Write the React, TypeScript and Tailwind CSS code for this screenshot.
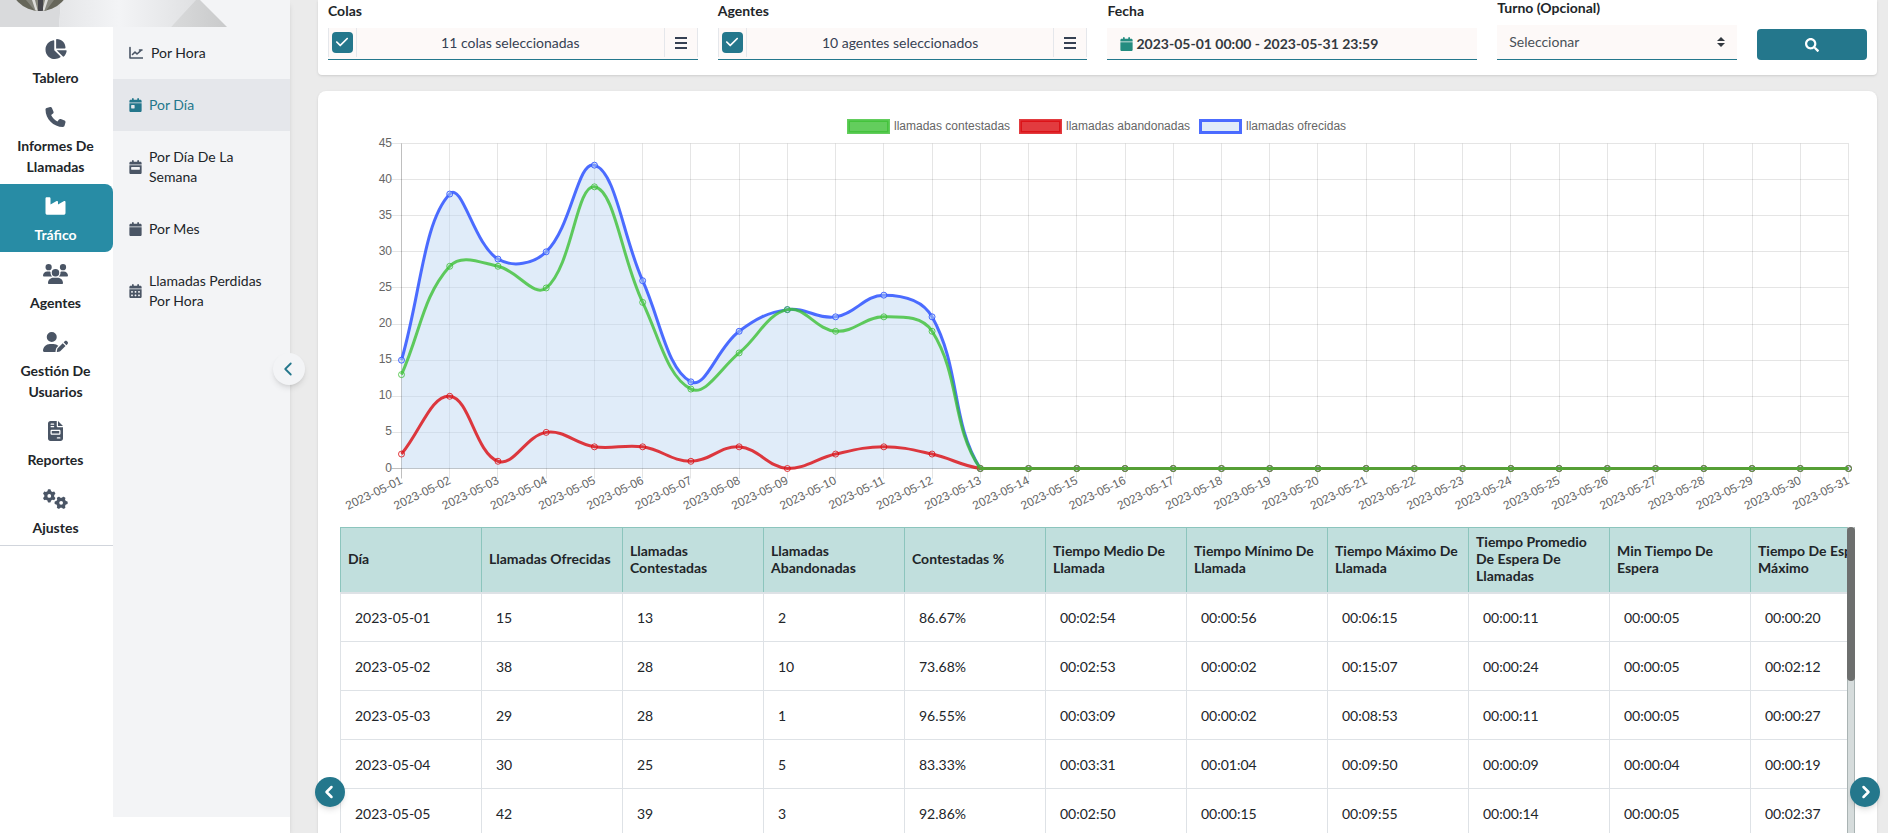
import type { ReactNode } from 'react';
import type { IconType } from 'react-icons';
import {
  FaCalendar, FaCalendarDay, FaCalendarDays, FaCalendarWeek, FaChartPie, FaCheck, FaFileInvoice,
  FaGears, FaIndustry, FaPhone, FaUserPen, FaUsers,
} from 'react-icons/fa6';
import { FaSearch } from 'react-icons/fa';
import { ChevronLeft, ChevronRight } from 'lucide-react';

interface NavItem {
  label:   string;
  icon:    IconType;
  active?: boolean;
}

function ChartLineIcon({ className }: { className?: string }) {
  return (
    <svg viewBox="0 0 14 14" className={className} fill="none" stroke="currentColor" strokeLinecap="round" strokeLinejoin="round">
      <path d="M1 1.5v10.5h12.5" strokeWidth="1.6" />
      <path d="M3.5 8.5l2.5-2.5 2 2 4.5-4M10.5 4h2.5" strokeWidth="1.6" />
    </svg>
  );
}

const NAV: NavItem[] = [
  { label: 'Tablero',              icon: FaChartPie },
  { label: 'Informes De Llamadas', icon: FaPhone },
  { label: 'Tráfico',              icon: FaIndustry, active: true },
  { label: 'Agentes',              icon: FaUsers },
  { label: 'Gestión De Usuarios',  icon: FaUserPen },
  { label: 'Reportes',             icon: FaFileInvoice },
  { label: 'Ajustes',              icon: FaGears },
];

const SUBNAV: { label: string; icon: ReactNode; active?: boolean }[] = [
  { label: 'Por Hora',                   icon: <ChartLineIcon className="mr-px size-[14px]" /> },
  { label: 'Por Día',                    icon: <FaCalendarDay className="h-[14px] w-[13px]" />, active: true },
  { label: 'Por Día De La Semana',       icon: <FaCalendarWeek className="h-[14px] w-[13px]" /> },
  { label: 'Por Mes',                    icon: <FaCalendar className="h-[14px] w-[13px]" /> },
  { label: 'Llamadas Perdidas Por Hora', icon: <FaCalendarDays className="h-[14px] w-[13px]" /> },
];

const OFFERED   = [15, 38, 29, 30, 42, 26, 12, 19, 22, 21, 24, 21];
const ANSWERED  = [13, 28, 28, 25, 39, 23, 11, 16, 22, 19, 21, 19];
const ABANDONED = [2, 10, 1, 5, 3, 3, 1, 3, 0, 2, 3, 2];

const SERIES = [
  { label: 'llamadas ofrecidas',   values: OFFERED,   color: 'rgba(51,88,255,0.88)', fill: 'rgba(186,212,241,0.45)' },
  { label: 'llamadas abandonadas', values: ABANDONED, color: 'rgba(219,10,15,0.8)',  fill: 'none' },
  { label: 'llamadas contestadas', values: ANSWERED,  color: 'rgba(60,193,53,0.8)',  fill: 'none' },
];

const LEGEND = [
  { label: 'llamadas contestadas', x: 508, color: 'rgba(60,193,53,0.8)',  fill: 'rgba(60,193,53,0.8)' },
  { label: 'llamadas abandonadas', x: 680, color: 'rgba(219,10,15,0.8)',  fill: 'rgba(219,10,15,0.8)' },
  { label: 'llamadas ofrecidas',   x: 860, color: 'rgba(51,88,255,0.88)', fill: 'rgba(186,212,241,0.45)' },
];

const DAYS  = 31;
const LEFT  = 61.5;
const RIGHT = 1508.5;
const TOP   = 36.5;
const BASE  = 361.5;
const Y_MAX = 45;

const dayX   = (i: number) => LEFT + (i * (RIGHT - LEFT)) / (DAYS - 1);
const valueY = (v: number) => BASE - (v * (BASE - TOP)) / Y_MAX;
const crisp  = (n: number) => Math.floor(n) + 0.5;

function toPoints(values: number[]) {
  return Array.from({ length: DAYS }, (_, i) => ({ x: dayX(i), y: valueY(values[i] ?? 0) }));
}

// Cubic spline with the handles kept inside the plot area.
function splinePath(values: number[]) {
  const pts = toPoints(values);
  const clamp = (y: number) => Math.min(BASE, Math.max(TOP, y));
  const handles = pts.map((p, i) => {
    const prev = pts[i - 1] ?? p;
    const next = pts[i + 1] ?? p;
    const d0 = Math.hypot(p.x - prev.x, p.y - prev.y);
    const d1 = Math.hypot(next.x - p.x, next.y - p.y);
    const a = (0.4 * d0) / (d0 + d1);
    const b = (0.4 * d1) / (d0 + d1);
    return {
      inX:  p.x - a * (next.x - prev.x),
      inY:  clamp(p.y - a * (next.y - prev.y)),
      outX: p.x + b * (next.x - prev.x),
      outY: clamp(p.y + b * (next.y - prev.y)),
    };
  });
  return pts.reduce((d, p, i) => {
    if (i === 0) return `M${p.x},${p.y}`;
    const h0 = handles[i - 1];
    const h1 = handles[i];
    return `${d}C${h0.outX},${h0.outY} ${h1.inX},${h1.inY} ${p.x},${p.y}`;
  }, '');
}

const HEADERS = [
  'Día', 'Llamadas Ofrecidas', 'Llamadas Contestadas', 'Llamadas Abandonadas', 'Contestadas %',
  'Tiempo Medio De Llamada', 'Tiempo Mínimo De Llamada', 'Tiempo Máximo De Llamada',
  'Tiempo Promedio De Espera De Llamadas', 'Min Tiempo De Espera', 'Tiempo De Espera Máximo',
];

const ROWS = [
  ['2023-05-01', '15', '13', '2',  '86.67%', '00:02:54', '00:00:56', '00:06:15', '00:00:11', '00:00:05', '00:00:20'],
  ['2023-05-02', '38', '28', '10', '73.68%', '00:02:53', '00:00:02', '00:15:07', '00:00:24', '00:00:05', '00:02:12'],
  ['2023-05-03', '29', '28', '1',  '96.55%', '00:03:09', '00:00:02', '00:08:53', '00:00:11', '00:00:05', '00:00:27'],
  ['2023-05-04', '30', '25', '5',  '83.33%', '00:03:31', '00:01:04', '00:09:50', '00:00:09', '00:00:04', '00:00:19'],
  ['2023-05-05', '42', '39', '3',  '92.86%', '00:02:50', '00:00:15', '00:09:55', '00:00:14', '00:00:05', '00:02:37'],
];

function Sidebar() {
  return (
    <aside className="relative z-10 flex h-full w-[290px] shrink-0 flex-col bg-white shadow-md">
      <div className="h-[27px] shrink-0 overflow-hidden bg-gray-100">
        <svg width="290" height="27" viewBox="0 0 290 27" aria-hidden="true">
          <defs>
            <linearGradient id="sheen" x1="0" x2="1" y1="0" y2="0">
              <stop offset="0" stopColor="#e5e6e8" />
              <stop offset="1" stopColor="#f3f4f6" />
            </linearGradient>
            <linearGradient id="peak" x1="0" x2="1" y1="0" y2="0">
              <stop offset="0" stopColor="#d9dadb" />
              <stop offset="1" stopColor="#c9cacb" />
            </linearGradient>
            <linearGradient id="slope" x1="0" x2="1" y1="0" y2="0">
              <stop offset="0" stopColor="#f3f4f6" />
              <stop offset="1" stopColor="#dfe0e2" />
            </linearGradient>
            <clipPath id="avatar"><circle cx="40" cy="-20" r="31" /></clipPath>
          </defs>
          <path d="M0 0h61l-2 27H0z" fill="#d9dadc" />
          <path d="M61 0h58v27H59z" fill="url(#sheen)" />
          <path d="M119 0h79l-27 27h-52z" fill="url(#slope)" />
          <path d="M171 27L196 0h4l27 27z" fill="url(#peak)" />
          <g clipPath="url(#avatar)">
            <rect width="80" height="12" fill="#66665a" />
            <path d="M26 0h28l-9 12h-9z" fill="#85857c" />
            <path d="M32 0h3l3 12h-2zM45 0h3l-4 12h-2z" fill="#ddddda" />
            <path d="M38 0h5v12h-5z" fill="#45454a" />
          </g>
        </svg>
      </div>
      <div className="flex min-h-0 flex-1">
        <nav aria-label="Principal" className="w-[113px] shrink-0 bg-white">
          <ul className="border-b border-gray-300">
            {NAV.map(({ label, icon: Icon, active }) => (
              <li key={label}>
                <a
                  href="#"
                  className={`flex flex-col items-center gap-2 pt-3 pr-[10px] pb-[7px] pl-2 text-center text-sm leading-[21px] font-bold ${active ? 'rounded-r-lg bg-[#288ca5] text-white' : 'text-[#212529]'}`}
                >
                  <Icon className={`h-5 w-[25px] ${active ? 'text-white' : 'text-gray-600'}`} />
                  {label}
                </a>
              </li>
            ))}
          </ul>
        </nav>
        <nav aria-label="Tráfico" className="mb-4 flex-1 bg-gray-100">
          <ul>
            {SUBNAV.map(({ label, icon, active }) => (
              <li key={label}>
                <a
                  href="#"
                  className={`flex items-center gap-[7px] p-4 text-sm leading-5 ${active ? 'bg-gray-200 text-[#24778c]' : 'text-[#212529]'}`}
                >
                  <span className={`shrink-0 ${active ? 'text-[#24778c]' : 'text-gray-600'}`}>{icon}</span>
                  {label}
                </a>
              </li>
            ))}
          </ul>
        </nav>
      </div>
      <button
        type="button"
        aria-label="Contraer menú"
        className="absolute top-[353px] -right-[15px] flex size-8 items-center justify-center rounded-full bg-gray-100 pr-[2px] text-[#24778c] shadow-md"
      >
        <ChevronLeft size={22} />
      </button>
    </aside>
  );
}

function MultiSelect({ id, label, text }: { id: string; label: string; text: string }) {
  return (
    <div>
      <label htmlFor={id} className="mb-[6px] block text-sm leading-[22px] font-bold text-[#212529]">{label}</label>
      <div className="flex h-8 border-b border-[#24778c] bg-[#fdf9f8] text-gray-700">
        <div className="mb-[2px] flex w-[29px] items-center justify-center border-x border-gray-200">
          <span className="relative flex size-[21px]">
            <input id={id} type="checkbox" defaultChecked className="size-[21px] appearance-none rounded bg-[#24778c]" />
            <FaCheck size={14} className="pointer-events-none absolute top-[3px] left-[3px] text-white" />
          </span>
        </div>
        <button type="button" className="mb-[2px] flex-1 text-center text-sm">{text}</button>
        <button type="button" aria-label={`Ver ${label.toLowerCase()}`} className="mb-[2px] flex w-[34px] items-center justify-center border-x border-gray-200">
          <svg viewBox="0 0 14 12" className="h-3 w-[14px]" fill="currentColor" aria-hidden="true">
            <path d="M1 0h12v2H1zM1 5h12v2H1zM1 10h12v2H1z" />
          </svg>
        </button>
      </div>
    </div>
  );
}

function Filters() {
  return (
    <form className="grid grid-cols-[37fr_37fr_37fr_24fr_11fr] items-end gap-5 rounded-b bg-white px-[10px] pb-[15px] shadow">
      <MultiSelect id="colas" label="Colas" text="11 colas seleccionadas" />
      <MultiSelect id="agentes" label="Agentes" text="10 agentes seleccionados" />
      <div>
        <label htmlFor="fecha" className="mb-[6px] block text-sm leading-[22px] font-bold text-[#212529]">Fecha</label>
        <div className="flex h-8 items-center gap-[3px] border-b border-[#24778c] bg-[#fdf9f8] pl-[13px]">
          <FaCalendar className="h-[14px] w-[13px] text-[#248c80]" />
          <input
            id="fecha"
            type="text"
            defaultValue="2023-05-01 00:00 - 2023-05-31 23:59"
            className="min-w-0 flex-1 bg-transparent text-sm font-bold text-[#343a40] outline-none"
          />
        </div>
      </div>
      <div>
        <label htmlFor="turno" className="mb-[9px] block text-sm leading-4 font-bold text-[#212529]">Turno (Opcional)</label>
        <div className="relative">
          <select id="turno" className="block h-[35px] w-full appearance-none border-b border-[#24778c] bg-[#fdf9f8] px-3 text-sm text-[#495057]">
            <option>Seleccionar</option>
          </select>
          <svg width="8" height="10" viewBox="0 0 4 5" className="pointer-events-none absolute top-3 right-3" aria-hidden="true">
            <path fill="#343a40" d="M2 0L0 2h4zm0 5L0 3h4z" />
          </svg>
        </div>
      </div>
      <button type="submit" aria-label="Buscar" className="flex h-[31px] items-center justify-center rounded bg-[#24778c] text-white">
        <FaSearch size={14} />
      </button>
    </form>
  );
}

function TrafficChart() {
  return (
    <svg viewBox="0 0 1515 420" className="block h-auto w-full font-['Liberation_Sans',Arial,sans-serif] text-xs" role="img" aria-label="Llamadas por día">
      {LEGEND.map((l) => (
        <g key={l.label}>
          <rect x={l.x + 0.5} y="13.5" width="40" height="12" fill={l.fill} stroke={l.color} strokeWidth="3" />
          <text x={l.x + 46} y="23" fill="#666">{l.label}</text>
        </g>
      ))}

      {Array.from({ length: 10 }, (_, i) => i * 5).map((v) => (
        <g key={v}>
          <path d={`M${LEFT - 10},${crisp(valueY(v))}H${RIGHT}`} stroke={v === 0 ? 'rgba(0,0,0,0.25)' : 'rgba(0,0,0,0.1)'} />
          <text x="52" y={valueY(v) + 3} textAnchor="end" fill="#666">{v}</text>
        </g>
      ))}
      {Array.from({ length: DAYS }, (_, i) => {
        const x = dayX(i);
        return (
          <g key={i}>
            <path d={`M${crisp(x)},${TOP}V${BASE + 10}`} stroke={i === 0 ? 'rgba(0,0,0,0.25)' : 'rgba(0,0,0,0.1)'} />
            <text transform={`translate(${x} ${BASE + 11}) rotate(-26)`} y="4" textAnchor="end" fill="#666">
              {`2023-05-${String(i + 1).padStart(2, '0')}`}
            </text>
          </g>
        );
      })}

      {SERIES.map((s) => (
        <g key={s.label}>
          {s.fill !== 'none' && <path d={`${splinePath(s.values)}L${RIGHT},${BASE}H${LEFT}Z`} fill={s.fill} />}
          <path d={splinePath(s.values)} fill="none" stroke={s.color} strokeWidth="3" />
          {toPoints(s.values).map((p) => (
            <circle key={p.x} cx={p.x} cy={p.y} r="3" fill={s.fill} stroke={s.color} />
          ))}
        </g>
      ))}
    </svg>
  );
}

function TrafficTable() {
  return (
    <div className="relative overflow-hidden">
      <table className="w-[1552px] table-fixed border-collapse text-left text-sm text-[#212529]">
        <thead>
          <tr className="h-[65px] bg-[#c1dfdd]">
            {HEADERS.map((h) => (
              <th key={h} className="border border-b-2 border-[#8cc5bd] border-b-[#dee2e6] px-[7px] pb-[2px] align-middle leading-[17px] font-bold">{h}</th>
            ))}
          </tr>
        </thead>
        <tbody>
          {ROWS.map((row) => (
            <tr key={row[0]} className="h-[49px]">
              {row.map((cell, i) => (
                <td key={i} className="border border-[#dee2e6] px-[14px] pt-[2px]">{cell}</td>
              ))}
            </tr>
          ))}
        </tbody>
      </table>
      <div className="absolute inset-y-0 right-0 w-2 border-x border-[#a9b3b3] bg-[#d6dcdc]">
        <div className="-mx-px h-[154px] rounded bg-[#6d6f6e]" />
      </div>
    </div>
  );
}

function PageArrow({ label, side, children }: { label: string; side: string; children: ReactNode }) {
  return (
    <button
      type="button"
      aria-label={label}
      className={`absolute bottom-[26px] flex size-[30px] items-center justify-center rounded-full bg-[#24778c] text-white shadow-md ${side}`}
    >
      {children}
    </button>
  );
}

export default function App() {
  return (
    <div className="flex h-screen overflow-hidden bg-[#ebebeb] font-[Lato,sans-serif]">
      <Sidebar />
      <main className="relative min-w-0 flex-1 overflow-hidden pr-[11px] pl-7">
        <Filters />
        <section className="mt-4 rounded-t-lg bg-white px-[22px] pt-4 pb-8 shadow">
          <TrafficChart />
          <TrafficTable />
        </section>
        <PageArrow label="Anterior" side="left-[25px] pr-[2px]"><ChevronLeft size={20} strokeWidth={3} /></PageArrow>
        <PageArrow label="Siguiente" side="right-2 pl-px"><ChevronRight size={20} strokeWidth={3} /></PageArrow>
      </main>
    </div>
  );
}
